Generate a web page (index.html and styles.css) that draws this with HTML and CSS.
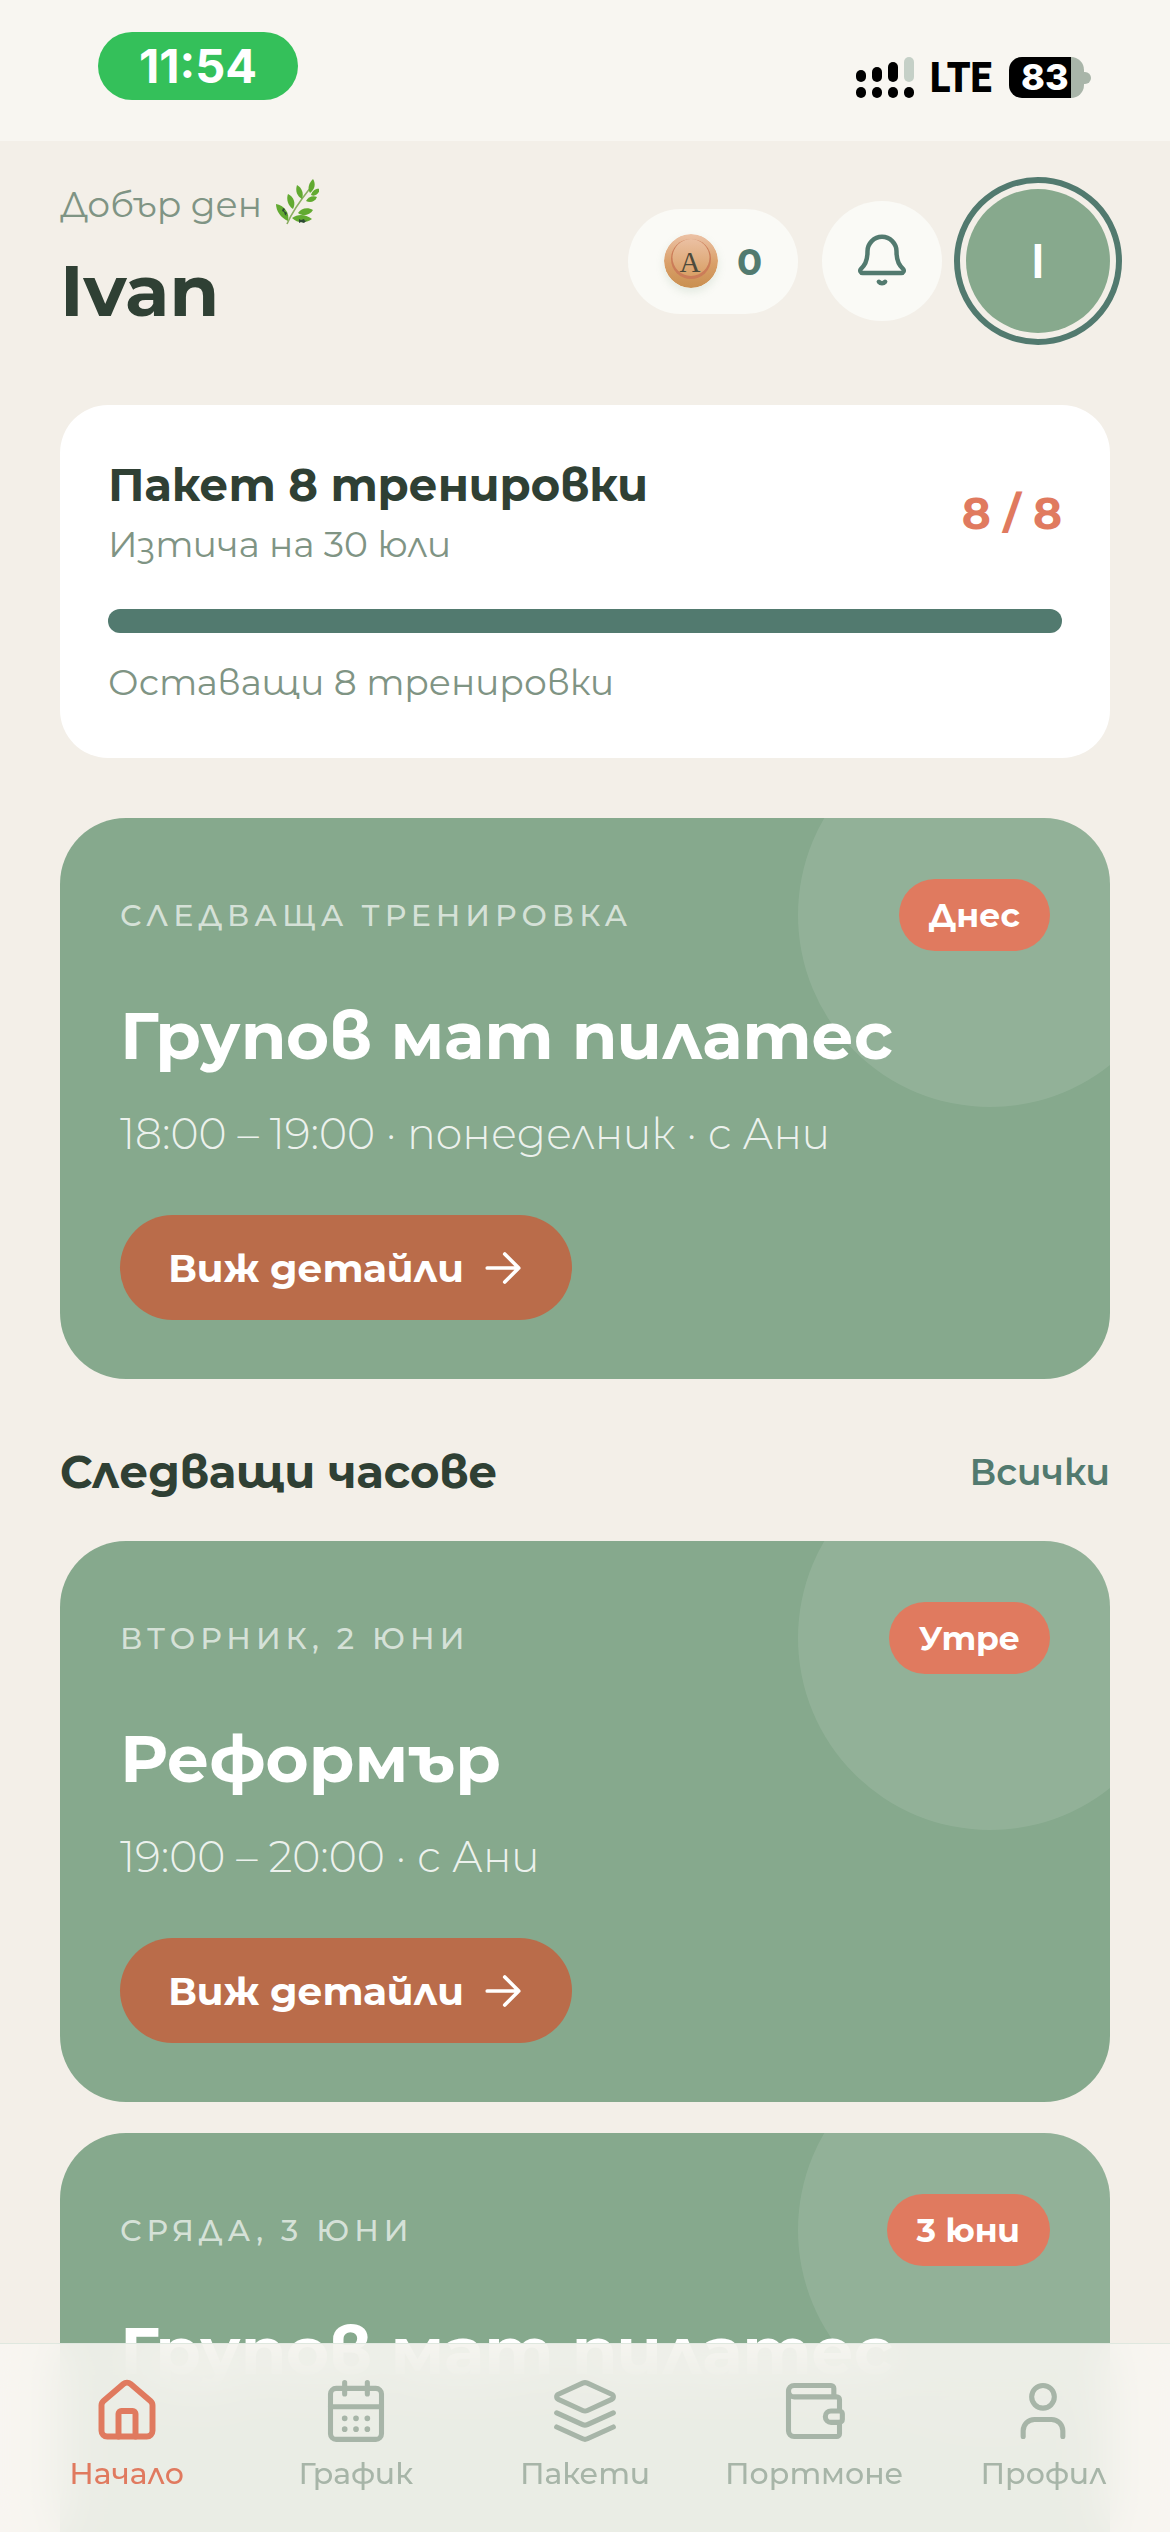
FILE: index.html
```html
<!doctype html>
<html lang="bg">
<head>
<meta charset="utf-8">
<title>Начало</title>
<link rel="stylesheet" href="styles.css">
</head>
<body>
<div class="screen">
  <div class="statusbar">
    <div class="time">11:54</div>
    <div class="status-right">
      <div class="signal">
        <div class="sig-col"><span class="bar h1"></span><span class="dot"></span></div>
        <div class="sig-col"><span class="bar h2"></span><span class="dot"></span></div>
        <div class="sig-col"><span class="bar h3"></span><span class="dot"></span></div>
        <div class="sig-col"><span class="bar h4 off"></span><span class="dot"></span></div>
      </div>
      <span class="lte">LTE</span>
      <div class="battery"><div class="batt-body">83</div><span class="batt-nub"></span></div>
    </div>
  </div>

  <main class="content">
    <header class="top">
      <div class="hello">
        <div class="greeting">Добър ден
          <svg class="leaf" viewBox="0 0 44 46" aria-hidden="true">
            <path class="stem" d="M12 45C17 33 24 23 36 8"/>
            <path class="lf" d="M35 14C32 9 34 4 38 0c3 5 2 10-3 14z"/>
            <path class="lf" d="M36 16c1-4 5-7 9-6-1 5-5 8-9 6z"/>
            <path class="lf" d="M27 20c-5-3-7-8-5-14 5 3 7 8 5 14z"/>
            <path class="lf" d="M31 22c2-4 7-6 11-4-2 5-7 6-11 4z"/>
            <path class="lf" d="M18 30c-5-3-7-10-5-15 6 3 8 9 5 15z"/>
            <path class="lf" d="M23 34c3-5 10-6 15-3-3 5-10 7-15 3z"/>
            <path class="lf" d="M13 42C6 39 1 32 1 25c8 1 14 9 12 17z"/>
            <path class="lf" d="M17 39c6-4 13-4 20 1-7 5-15 4-20-1z"/>
            <path class="spot" d="M8 29l2 1-1 2 3 2-1 2 2 1-3-1-1-3-2-1z"/>
            <path class="spot" d="M24 40l2 1 3-1 1 2 2-1-3 3-3-1-2 1z"/>
          </svg>
        </div>
        <h1 class="name">Ivan</h1>
      </div>
      <div class="top-actions">
        <div class="coins">
          <svg class="coin" viewBox="0 0 54 54" aria-hidden="true">
            <defs>
              <linearGradient id="coinOuter" x1="0" y1="0" x2="0" y2="1"><stop offset="0" stop-color="#ecc2a6"/><stop offset=".55" stop-color="#d99f68"/><stop offset="1" stop-color="#c98f50"/></linearGradient>
              <linearGradient id="coinInner" x1="0" y1="0" x2="0" y2="1"><stop offset="0" stop-color="#ebc0a2"/><stop offset="1" stop-color="#d9a066"/></linearGradient>
            </defs>
            <circle cx="27" cy="27" r="27" fill="url(#coinOuter)"/>
            <circle cx="27" cy="25" r="20" fill="#cb7c58"/>
            <circle cx="27" cy="23.5" r="18.5" fill="url(#coinInner)"/>
            <text class="coin-a" x="26" y="38" text-anchor="middle">A</text>
          </svg>
          <span class="coin-count">0</span>
        </div>
        <button class="bell" aria-label="Известия">
          <svg viewBox="0 0 24 24" class="bell-icon" aria-hidden="true"><path d="M3.262 15.326A1 1 0 0 0 4 17h16a1 1 0 0 0 .74-1.673C19.41 13.956 18 12.499 18 8A6 6 0 0 0 6 8c0 4.499-1.411 5.956-2.738 7.326"/><path d="M10.7 20.6a1.7 1.7 0 0 0 2.6 0"/></svg>
        </button>
        <div class="avatar">I</div>
      </div>
    </header>

    <section class="pack">
      <div class="pack-head">
        <div>
          <div class="pack-title">Пакет 8 тренировки</div>
          <div class="pack-sub">Изтича на 30 юли</div>
        </div>
        <div class="pack-count">8 / 8</div>
      </div>
      <div class="progress"></div>
      <div class="pack-sub pack-left">Оставащи 8 тренировки</div>
    </section>

    <article class="session session-first">
      <span class="blob"></span>
      <div class="session-head"><span class="session-label">СЛЕДВАЩА ТРЕНИРОВКА</span><span class="badge">Днес</span></div>
      <h2 class="session-title">Групов мат пилатес</h2>
      <p class="session-meta">18:00 – 19:00 · понеделник · с Ани</p>
      <button class="cta">Виж детайли <svg viewBox="0 0 24 24" class="arrow" aria-hidden="true"><path d="M3 12h18M13 4l8 8-8 8"/></svg></button>
    </article>

    <div class="section-row"><h3 class="section-title">Следващи часове</h3><span class="section-link">Всички</span></div>

    <article class="session">
      <span class="blob"></span>
      <div class="session-head"><span class="session-label">ВТОРНИК, 2 ЮНИ</span><span class="badge">Утре</span></div>
      <h2 class="session-title">Реформър</h2>
      <p class="session-meta">19:00 – 20:00 · с Ани</p>
      <button class="cta">Виж детайли <svg viewBox="0 0 24 24" class="arrow" aria-hidden="true"><path d="M3 12h18M13 4l8 8-8 8"/></svg></button>
    </article>

    <article class="session">
      <span class="blob"></span>
      <div class="session-head"><span class="session-label">СРЯДА, 3 ЮНИ</span><span class="badge">3 юни</span></div>
      <h2 class="session-title">Групов мат пилатес</h2>
    </article>
  </main>

  <nav class="tabbar">
    <a class="tab active">
      <svg viewBox="0 0 24 24" aria-hidden="true"><path d="M15 21v-8a1 1 0 0 0-1-1h-4a1 1 0 0 0-1 1v8"/><path d="M3 10a2 2 0 0 1 .709-1.528l7-5.999a2 2 0 0 1 2.582 0l7 5.999A2 2 0 0 1 21 10v9a2 2 0 0 1-2 2H5a2 2 0 0 1-2-2z"/></svg>
      <span>Начало</span>
    </a>
    <a class="tab">
      <svg viewBox="0 0 24 24" aria-hidden="true"><path d="M8 2v4M16 2v4"/><rect x="3" y="4" width="18" height="18" rx="2"/><path d="M3 10.5h18"/><path class="dots" d="M8 14.6h.01M12 14.6h.01M16 14.6h.01M8 18.4h.01M12 18.4h.01M16 18.4h.01"/></svg>
      <span>График</span>
    </a>
    <a class="tab">
      <svg viewBox="0 0 24 24" aria-hidden="true"><path d="m12.83 2.18a2 2 0 0 0-1.66 0L2.6 6.08a1 1 0 0 0 0 1.83l8.58 3.91a2 2 0 0 0 1.66 0l8.58-3.9a1 1 0 0 0 0-1.83Z"/><path d="m22 17.65-9.17 4.16a2 2 0 0 1-1.66 0L2 17.65"/><path d="m22 12.65-9.17 4.16a2 2 0 0 1-1.66 0L2 12.65"/></svg>
      <span>Пакети</span>
    </a>
    <a class="tab">
      <svg viewBox="0 0 24 24" aria-hidden="true"><path d="M19 7V4a1 1 0 0 0-1-1H5a2 2 0 0 0 0 4h15a1 1 0 0 1 1 1v4h-3a2 2 0 0 0 0 4h3a1 1 0 0 0 1-1v-2a1 1 0 0 0-1-1"/><path d="M3 5v14a2 2 0 0 0 2 2h15a1 1 0 0 0 1-1v-4"/></svg>
      <span>Портмоне</span>
    </a>
    <a class="tab">
      <svg viewBox="0 0 24 24" aria-hidden="true"><path d="M19 21v-2a4 4 0 0 0-4-4H9a4 4 0 0 0-4 4v2"/><circle cx="12" cy="7" r="4"/></svg>
      <span>Профил</span>
    </a>
  </nav>
</div>
</body>
</html>
```
FILE: styles.css
```css
* { box-sizing: border-box; }
html, body { margin: 0; padding: 0; }
body { font-family: Montserrat, "Noto Sans", sans-serif; background: #f3efe8; color: #2f4034; }
.screen { position: relative; width: 1170px; height: 2532px; overflow: hidden; background: #f3efe8; }

/* status bar */
.statusbar { height: 141px; background: #f8f6f1; display: flex; align-items: flex-start; padding: 32px 79px 0 98px; justify-content: space-between; }
.time { width: 200px; height: 68px; border-radius: 34px; background: #34c05a; color: #fff; font: 700 47px/68px Inter, sans-serif; text-align: center; }
.status-right { display: flex; align-items: flex-start; margin-top: 25px; }
.signal { display: flex; gap: 6px; height: 41px; }
.sig-col { width: 10px; display: flex; flex-direction: column; justify-content: flex-end; gap: 5px; }
.bar, .dot { display: block; width: 10px; background: #000; border-radius: 5px; }
.dot { height: 11px; }
.bar.h1 { height: 12px; }
.bar.h2 { height: 15px; }
.bar.h3 { height: 20px; }
.bar.h4 { height: 25px; }
.bar.off { background: #c5d0c7; }
.lte { font: 900 42px/41px Roboto, sans-serif; color: #000; margin-left: 16px; width: 66px; transform: scaleX(.9); transform-origin: 0 50%; white-space: nowrap; }
.battery { display: flex; align-items: center; margin-left: 13px; }
.batt-body { width: 75px; height: 41px; border-radius: 13px; background: linear-gradient(90deg, #000 62px, #a9b5a9 62px); color: #fff; font: 800 36px/41px Inter, sans-serif; padding-left: 12px; white-space: nowrap; }
.batt-nub { width: 7px; height: 12px; background: #a9b5a9; border-radius: 0 6px 6px 0; }

/* content */
.content { padding: 0 60px; }
.top { display: flex; justify-content: space-between; align-items: flex-start; padding-top: 36px; margin-right: -12px; }
.greeting { display: flex; align-items: center; gap: 13px; font-size: 36px; line-height: 46px; color: #7f9484; margin-top: 4px; }
.leaf { width: 44px; height: 46px; margin-top: -4px; }
.stem { fill: none; stroke: #8cae63; stroke-width: 1.6; }
.lf { fill: #62aa31; }
.spot { fill: #2d4a34; }
.name { margin: 19px 0 0; font-size: 72px; line-height: 88px; font-weight: 700; color: #2f4034; }
.top-actions { display: flex; align-items: center; }
.coins { width: 170px; height: 105px; border-radius: 53px; background: #fafaf6; display: flex; align-items: center; padding-left: 36px; gap: 19px; }
.coin { width: 54px; height: 54px; border-radius: 50%; box-shadow: 0 4px 8px rgba(135,169,141,.2); flex: none; }
.coin-a { font-family: "Liberation Serif", serif; font-size: 29px; fill: #4d4a3b; }
.coin-count { font-size: 37px; font-weight: 700; color: #527a6f; }
.bell { width: 120px; height: 120px; border-radius: 50%; border: 0; padding: 0; background: #fafaf6; margin-left: 24px; display: flex; align-items: center; justify-content: center; }
.bell-icon { width: 58px; height: 58px; fill: none; stroke: #527a6f; stroke-width: 1.85; stroke-linecap: round; stroke-linejoin: round; }
.avatar { width: 168px; height: 168px; margin-left: 12px; border-radius: 50%; border: 6px solid #527a6f; padding: 6px; background: #87a98d content-box; color: #fff; font-size: 48px; font-weight: 600; display: flex; align-items: center; justify-content: center; }

.pack { margin-top: 60px; background: #fff; border-radius: 48px; padding: 54px 48px 53px; }
.pack-head { display: flex; justify-content: space-between; align-items: center; }
.pack-title { font-size: 45px; line-height: 52px; font-weight: 700; color: #2f4034; }
.pack-sub { font-size: 36px; line-height: 46px; font-weight: 400; color: #7f9484; margin-top: 10px; }
.pack-count { font-size: 44px; font-weight: 700; color: #e07a5f; }
.progress { height: 24px; margin-top: 42px; border-radius: 12px; background: #527a6f; }
.pack-left { margin-top: 26px; }

/* session cards */
.session { position: relative; overflow: hidden; background: #86a98d; border-radius: 66px; padding: 61px 60px 58px; margin-bottom: 31px; height: 561px; }
.session-first { margin-top: 60px; margin-bottom: 0; }
.blob { position: absolute; top: -95px; right: -72px; width: 384px; height: 384px; border-radius: 50%; background: rgba(255,255,255,.1); }
.session-head { position: relative; display: flex; justify-content: space-between; align-items: center; height: 72px; }
.session-label { font-size: 30px; letter-spacing: 5px; font-weight: 500; color: rgba(255,255,255,.68); }
.badge { height: 72px; padding: 0 30px; border-radius: 36px; background: #e07a5f; color: #fff; font-size: 33px; font-weight: 700; line-height: 72px; }
.session-title { position: relative; margin: 45px 0 0; font-size: 66px; line-height: 80px; font-weight: 700; color: #fff; }
.session-meta { position: relative; margin: 30px 0 0; font-size: 42.6px; line-height: 56px; font-weight: 300; color: rgba(255,255,255,.86); }
.cta { position: relative; margin-top: 53px; width: 452px; height: 105px; border: 0; border-radius: 53px; background: #ba6c4a; color: #fff; font: 700 39px Montserrat, sans-serif; display: flex; align-items: center; justify-content: center; gap: 18px; padding: 0; }
.arrow { width: 42px; height: 42px; fill: none; stroke: #fff; stroke-width: 2.1; stroke-linecap: round; stroke-linejoin: round; }

.section-row { display: flex; justify-content: space-between; align-items: center; margin: 66px 0 42px; height: 54px; }
.section-title { margin: 0; font-size: 45px; line-height: 54px; font-weight: 700; color: #2f4034; }
.section-link { font-size: 36px; font-weight: 600; color: #527a6f; }

/* tab bar */
.tabbar { position: absolute; left: 0; right: 0; top: 2343px; bottom: 0; padding: 0 12px; display: grid; grid-template-columns: repeat(5, 1fr); background: rgba(248,246,241,.88); border-top: 1px solid #dfe8df; -webkit-backdrop-filter: blur(24px); backdrop-filter: blur(24px); }
.tab { display: flex; flex-direction: column; align-items: center; padding-top: 33px; color: #a7b5a8; font-size: 30px; font-weight: 500; }
.tab svg { width: 68px; height: 68px; fill: none; stroke: currentColor; stroke-width: 1.8; stroke-linecap: round; stroke-linejoin: round; }
.tab .dots { stroke-width: 2; }
.tab.active svg { stroke-width: 2.1; }
.tab span { margin-top: 11px; line-height: 36px; white-space: nowrap; }
.tab.active { color: #e07a5f; }
```
